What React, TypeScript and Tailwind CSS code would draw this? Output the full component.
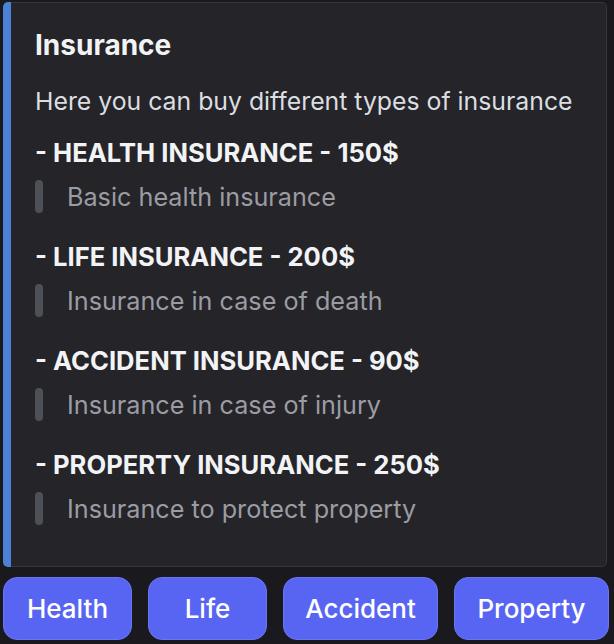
import React from "react";

const fields = [
  { name: "- HEALTH INSURANCE - 150$", value: "Basic health insurance" },
  { name: "- LIFE INSURANCE - 200$", value: "Insurance in case of death" },
  { name: "- ACCIDENT INSURANCE - 90$", value: "Insurance in case of injury" },
  { name: "- PROPERTY INSURANCE - 250$", value: "Insurance to protect property" },
];

const buttons = [
  { label: "Health", w: "w-[129px]" },
  { label: "Life", w: "w-[119px]" },
  { label: "Accident", w: "w-[155px]" },
  { label: "Property", w: "w-[155px]" },
];

export default function App() {
  return (
    <div
      className="w-[614px] h-[644px] bg-[#1a1a1e] pt-[2px] pl-[3px] overflow-hidden"
      style={{ fontFamily: 'Inter, "Noto Sans", sans-serif' }}
    >
      <div className="w-[604px] h-[565px] flex rounded-[5px] overflow-hidden bg-[#242429]">
        <div className="w-[8px] bg-[#4a83d6] shrink-0" />
        <div className="flex-1 border border-l-0 border-[#36363b] rounded-r-[5px] pl-[24px] pt-[24px]">
          <div className="text-[28px] leading-[36px] font-bold text-[#f2f3f5]">Insurance</div>
          <div className="mt-[22px] text-[24.8px] leading-[32px] text-[#dbdee1]">
            Here you can buy different types of insurance
          </div>
          <div className="flex flex-col">
            {fields.map((f) => (
              <div key={f.name} className="mt-[12px] first:mt-[20px]">
                <div className="text-[25.6px] leading-[32px] font-bold text-[#f2f3f5]">{f.name}</div>
                <div className="mt-[11px] flex items-center h-[33px]">
                  <div className="w-[8px] h-[33px] rounded-[4px] bg-[#4e5058]" />
                  <div className="ml-[24px] text-[25.2px] leading-[32px] text-[#9b9ca3]">{f.value}</div>
                </div>
                <div className="h-[16px]" />
              </div>
            ))}
          </div>
        </div>
      </div>
      <div className="mt-[10px] flex gap-[16px]">
        {buttons.map((b) => (
          <div
            key={b.label}
            className={`${b.w} h-[63px] rounded-[14px] bg-[#5865f2] border border-[#6a75f4] flex items-center justify-center text-[26px] font-medium text-white`}
          >
            {b.label}
          </div>
        ))}
      </div>
    </div>
  );
}
